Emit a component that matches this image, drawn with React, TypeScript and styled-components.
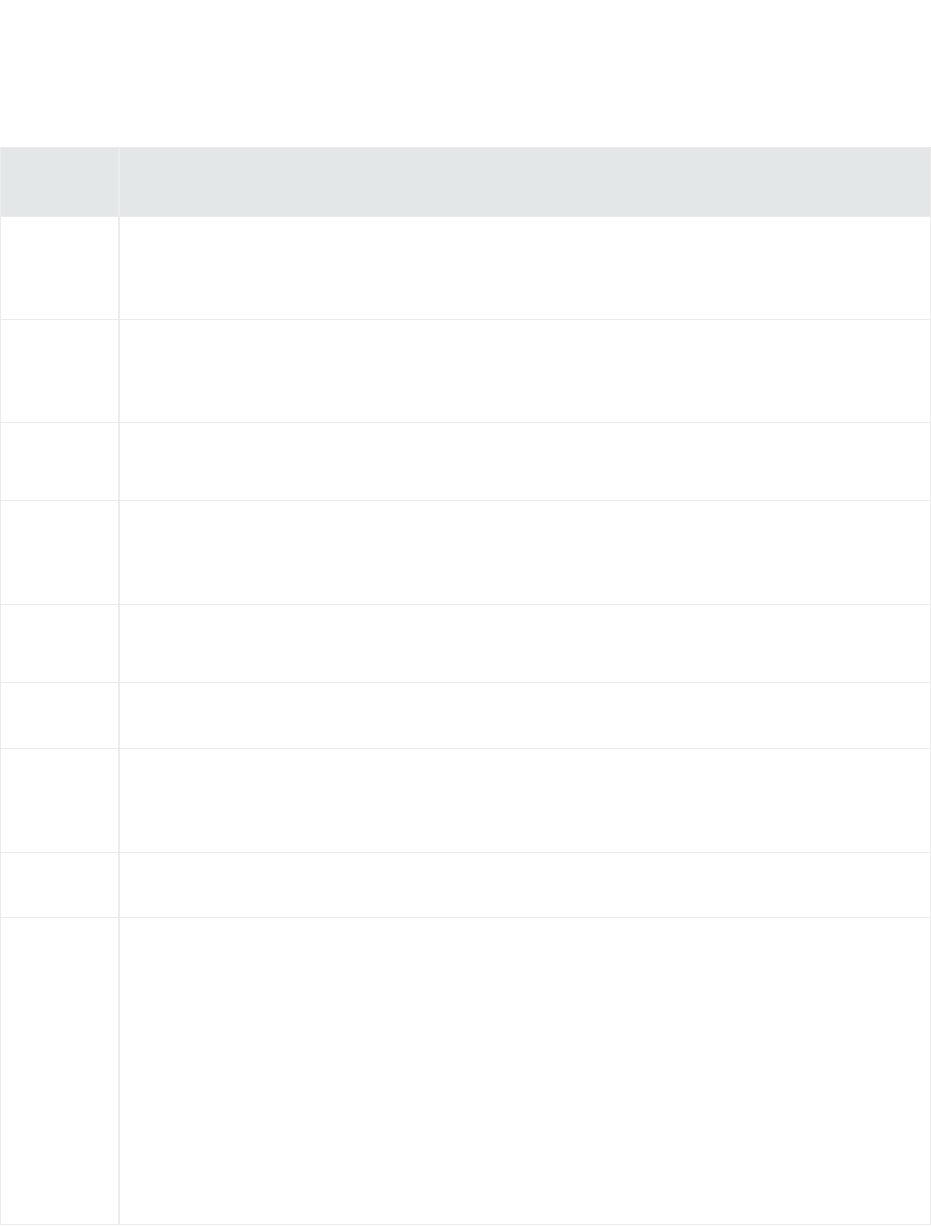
import React from "react";
import styled, { createGlobalStyle } from "styled-components";

const Global = createGlobalStyle`
  html, body { margin: 0; padding: 0; background: #ffffff; }
  body { font-family: "Open Sans", "Liberation Sans", sans-serif; }
`;

const Page = styled.div`
  padding-top: 147px;
  width: 931px;
`;

const Table = styled.div`
  width: 931px;
  box-sizing: border-box;
  border: 1px solid #ebebeb;
  display: flex;
  flex-direction: column;
`;

const Row = styled.div<{ $h: number; $head?: boolean; $last?: boolean }>`
  display: grid;
  grid-template-columns: 119px 1fr;
  height: ${(p) => p.$h}px;
  background: ${(p) => (p.$head ? "#e3e7e8" : "#ffffff")};
  border-bottom: ${(p) => (p.$last ? "none" : "1px solid #ebebeb")};
  box-sizing: content-box;
`;

const LabelCell = styled.div`
  border-right: 2px solid #ececec;
`;

const ValueCell = styled.div``;

const rows = [102, 102, 77, 103, 77, 65, 103, 64, 306];

export default function App() {
  return (
    <>
      <Global />
      <Page>
        <Table>
          <Row $h={68} $head>
            <LabelCell />
            <ValueCell />
          </Row>
          {rows.map((h, i) => (
            <Row key={i} $h={h} $last={i === rows.length - 1}>
              <LabelCell />
              <ValueCell />
            </Row>
          ))}
        </Table>
      </Page>
    </>
  );
}
